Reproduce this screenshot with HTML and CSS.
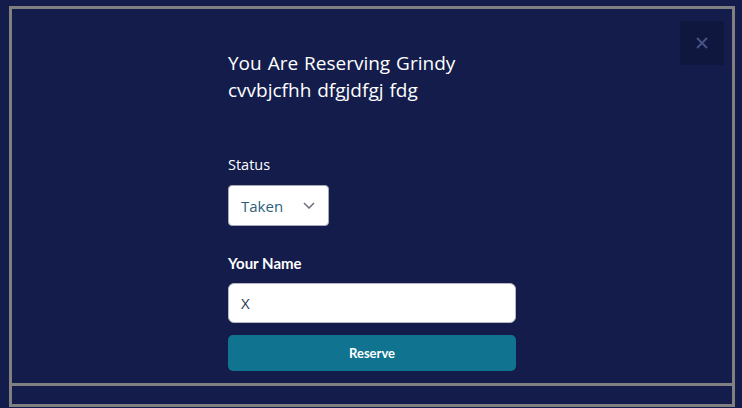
FILE: index.html
```html
<!DOCTYPE html>
<html>
<head>
<meta charset="utf-8">
<link rel="stylesheet" href="styles.css">
</head>
<body>
<div class="modal">
  <div class="content">
    <button class="close" aria-label="Close">
      <svg width="12" height="12" viewBox="0 0 12 12"><path d="M1 1 L11 11 M11 1 L1 11" stroke="#4a5388" stroke-width="1.8" fill="none"/></svg>
    </button>
    <div class="form">
      <h2 class="title">You Are Reserving Grindy<br>cvvbjcfhh dfgjdfgj fdg</h2>
      <label class="label">Status</label>
      <div class="select">
        <span>Taken</span>
        <svg width="12" height="7" viewBox="0 0 12 7"><path d="M1 1 L6 6 L11 1" stroke="#6b6f7a" stroke-width="1.5" fill="none"/></svg>
      </div>
      <label class="label bold">Your Name</label>
      <input class="input" type="text" value="X">
      <button class="reserve">Reserve</button>
    </div>
  </div>
  <div class="footer"></div>
</div>
</body>
</html>
```
FILE: styles.css
```css
html, body {
  margin: 0;
  padding: 0;
  background: #131c4b;
  overflow: hidden;
}
body {
  font-family: "Open Sans", "Noto Sans", sans-serif;
  color: #ffffff;
}
.modal {
  margin: 6px 0 0 9px;
  width: 720px;
  border: 3px solid #808080;
}
.content {
  position: relative;
  height: 377px;
  border-bottom: 3px solid #808080;
  box-sizing: border-box;
  padding-top: 41px;
}
.footer {
  height: 18px;
}
.close {
  position: absolute;
  top: 12px;
  right: 8px;
  width: 44px;
  height: 44px;
  border: none;
  padding: 0;
  background: #0f173f;
  display: flex;
  align-items: center;
  justify-content: center;
}
.form {
  width: 288px;
  margin: 0 auto;
  display: flex;
  flex-direction: column;
  align-items: flex-start;
}
.title {
  margin: 0;
  font-weight: 400;
  font-size: 19px;
  line-height: 27px;
  word-spacing: 1px;
  color: #ffffff;
}
.label {
  display: block;
  margin-top: 51px;
  font-size: 14.5px;
  line-height: 20px;
  color: #ffffff;
}
.label.bold {
  margin-top: 27px;
  font-family: Lato, sans-serif;
  font-weight: 700;
  font-size: 15px;
}
.select {
  margin-top: 10px;
  box-sizing: border-box;
  width: 101px;
  height: 41px;
  background: #ffffff;
  border: 1px solid #a6a9b6;
  border-radius: 4px;
  display: flex;
  align-items: center;
  justify-content: space-between;
  padding: 0 13px 0 12px;
  font-size: 15px;
  color: #2c5f7c;
}
.input {
  margin-top: 10px;
  box-sizing: border-box;
  width: 288px;
  height: 40px;
  border: 1px solid #b4b7c4;
  border-radius: 6px;
  background: #ffffff;
  padding: 0 12px;
  font-family: "Open Sans", sans-serif;
  font-size: 15px;
  color: #2a3550;
  outline: none;
}
.reserve {
  margin-top: 12px;
  width: 288px;
  height: 36px;
  border: none;
  border-radius: 5px;
  background: #10738f;
  color: #ffffff;
  font-family: Lato, sans-serif;
  font-weight: 700;
  font-size: 13px;
}
```
